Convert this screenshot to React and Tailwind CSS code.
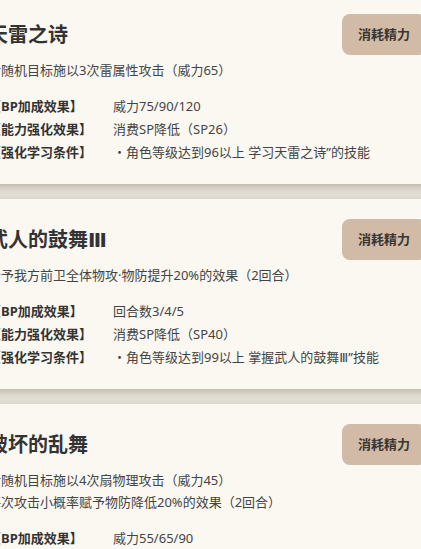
import React from "react";

const III = <span className="font-['DejaVu_Sans',sans-serif]">Ⅲ</span>;

const skills = [
  {
    name: "天雷之诗",
    desc: ["对随机目标施以3次雷属性攻击（威力65）"],
    bp: "威力75/90/120",
    boost: "消费SP降低（SP26）",
    learn: <>・角色等级达到96以上 学习天雷之诗”的技能</>,
  },
  {
    name: <>武人的鼓舞{III}</>,
    desc: ["给予我方前卫全体物攻·物防提升20%的效果（2回合）"],
    bp: "回合数3/4/5",
    boost: "消费SP降低（SP40）",
    learn: <>・角色等级达到99以上 掌握武人的鼓舞{III}”技能</>,
  },
  {
    name: "破坏的乱舞",
    desc: ["对随机目标施以4次扇物理攻击（威力45）", "每次攻击小概率赋予物防降低20%的效果（2回合）"],
    bp: "威力55/65/90",
    boost: "消费SP降低（SP30）",
    learn: <>・角色等级达到99以上 掌握破坏的乱舞”技能</>,
  },
];

function Row({ label, value }) {
  return (
    <div className="grid grid-cols-[125px_1fr] text-[13px] leading-[23px]">
      <div className="font-bold text-[#333]">{label}</div>
      <div className="text-[#444] whitespace-nowrap">{value}</div>
    </div>
  );
}

function SkillCard({ s }) {
  return (
    <div className="bg-[#fbf8f2] pl-4 pr-[18px] pt-5 pb-5 shadow-[0_3px_6px_rgba(60,40,20,0.2)]">
      <div className="flex h-[41px] items-center justify-between">
        <div className="text-[20px] font-bold text-[#333] whitespace-nowrap">{s.name}</div>
        <div className="flex h-[41px] items-center rounded-lg bg-[#d2bba6] px-4 text-[13px] font-bold text-[#3a3632]">
          消耗精力
        </div>
      </div>
      <div className="mt-1 text-[13px] leading-[22px] text-[#444]">
        {s.desc.map((d, i) => (
          <div key={i} className="whitespace-nowrap">{d}</div>
        ))}
      </div>
      <div className="mt-[14px]">
        <Row label="【BP加成效果】" value={s.bp} />
        <Row label="【能力强化效果】" value={s.boost} />
        <Row label="【强化学习条件】" value={s.learn} />
      </div>
    </div>
  );
}

export default function App() {
  return (
    <div className="h-[549px] w-[421px] overflow-hidden bg-[#e2ddd4] font-['Noto_Sans','Noto_Sans_CJK_SC',sans-serif]">
      <div className="ml-[-28px] mt-[-6px] flex w-[472px] flex-col gap-[15px]">
        {skills.map((s, i) => (
          <SkillCard key={i} s={s} />
        ))}
      </div>
    </div>
  );
}
